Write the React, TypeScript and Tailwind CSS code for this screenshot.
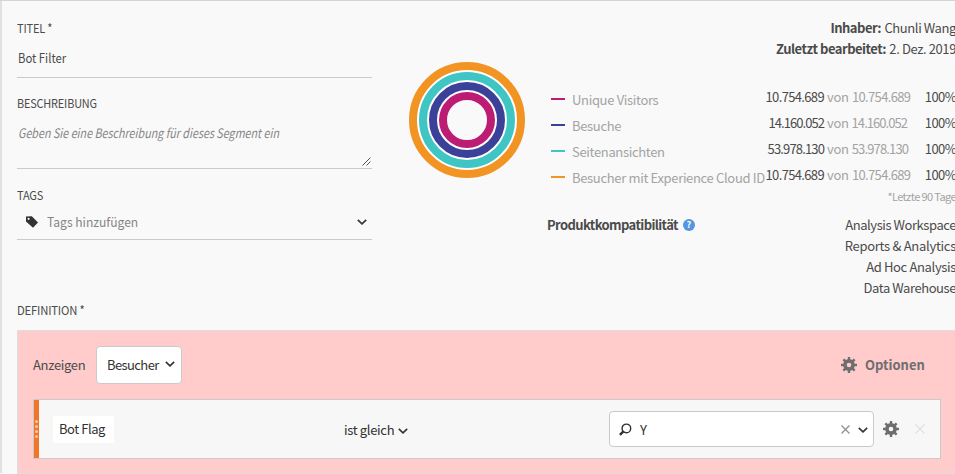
import type { ReactNode } from "react";

const FONT = "font-['Noto_Sans_CJK_SC','Noto_Sans',sans-serif]";

function Chevron({ className = "" }: { className?: string }) {
  return (
    <svg className={`shrink-0 ${className}`} width="10" height="6" viewBox="0 0 10 6" fill="none" stroke="#323232" strokeWidth="1.6">
      <path d="M0.8 0.8 L5 4.8 L9.2 0.8" />
    </svg>
  );
}

function Gear() {
  return (
    <svg width="16" height="16" viewBox="0 0 16 16" className="shrink-0">
      <g fill="#6e6e6e">
        {[0, 45, 90, 135, 180, 225, 270, 315].map((a) => (
          <rect key={a} x="6.8" y="0" width="2.4" height="4" transform={`rotate(${a} 8 8)`} />
        ))}
      </g>
      <circle cx="8" cy="8" r="4.1" fill="none" stroke="#6e6e6e" strokeWidth="3.6" />
    </svg>
  );
}

function Cross({ color, size }: { color: string; size: number }) {
  return (
    <svg width={size} height={size} viewBox="0 0 10 10" stroke={color} strokeWidth="1.4" className="shrink-0">
      <path d="M0.6 0.6 L9.4 9.4 M9.4 0.6 L0.6 9.4" />
    </svg>
  );
}

function Label({ children, className }: { children: ReactNode; className: string }) {
  return (
    <div className={`h-4 w-max origin-left text-[12px] leading-4 tracking-[-0.2px] text-[#4b4b4b] ${className}`}>{children}</div>
  );
}

const rings = [
  { r: 54, color: "#f29423" },
  { r: 44, color: "#3fc5c3" },
  { r: 34, color: "#3b4199" },
  { r: 24, color: "#bc1c74" },
];

const metrics = [
  { name: "Unique Visitors", color: "#bc1c74", value: "10.754.689", tracking: "tracking-[-0.65px]" },
  { name: "Besuche", color: "#3b4199", value: "14.160.052", tracking: "tracking-[-0.95px]" },
  { name: "Seitenansichten", color: "#3fc5c3", value: "53.978.130", tracking: "tracking-[-0.85px]" },
  { name: "Besucher mit Experience Cloud ID", color: "#f29423", value: "10.754.689", tracking: "tracking-[-0.65px]" },
];

const products = [
  { name: "Analysis Workspace", tracking: "tracking-[-0.43px]" },
  { name: "Reports & Analytics", tracking: "tracking-[-0.28px]" },
  { name: "Ad Hoc Analysis", tracking: "tracking-[-0.35px]" },
  { name: "Data Warehouse", tracking: "tracking-[-0.43px]" },
];

function Fields() {
  return (
    <div className="w-[355px] shrink-0 pt-[19px]">
      <Label className="scale-x-[0.92]">TITEL *</Label>
      <div className="mt-[10px] h-[32px] border-b border-[#cacaca] pl-px text-[13px] leading-6 text-[#4b4b4b]">
        <span className="inline-block origin-left scale-x-[0.87]">Bot Filter</span>
      </div>
      <div className="mt-[17px]">
        <Label className="scale-x-[0.91]">BESCHREIBUNG</Label>
      </div>
      <div className="mt-[10px] flex h-[48px] justify-between border-b border-[#cacaca] pl-px">
        <span className="w-[310px] origin-left scale-x-[0.827] whitespace-nowrap text-[13px] italic leading-6 text-[#858585]">
          Geben Sie eine Beschreibung für dieses Segment ein
        </span>
        <svg width="9" height="9" viewBox="0 0 9 9" stroke="#555" strokeWidth="1" className="mb-[2px] mr-[1px] self-end">
          <path d="M0.5 8.5 L8.5 0.5 M4.5 8.5 L8.5 4.5" />
        </svg>
      </div>
      <div className="mt-[18px]">
        <Label className="scale-x-[0.92]">TAGS</Label>
      </div>
      <div className="mt-[3px] flex h-[34px] items-center border-b border-[#cacaca] pb-[2px] pl-[9px] pr-[5px]">
        <svg width="12" height="12" viewBox="0 0 12 12" fill="#323232">
          <path fillRule="evenodd" d="M0 0.6 L5.8 0.2 L12 6.6 L7 11.8 L0 5.6 Z M2.6 1.7 a1.1 1.1 0 1 0 0.01 0 Z" />
        </svg>
        <span className="ml-[9px] origin-left scale-x-[0.93] text-[13px] leading-5 text-[#858585]">Tags hinzufügen</span>
        <Chevron className="ml-auto" />
      </div>
      <div className="mt-[62px]">
        <Label className="scale-x-[0.94]">DEFINITION *</Label>
      </div>
    </div>
  );
}

function Summary() {
  return (
    <div className="ml-[22px] w-[409px] shrink-0 pt-[16px] text-[13px] leading-[21px] text-[#4b4b4b]">
      <div className="whitespace-nowrap text-right tracking-[-0.5px]">
        <b>Inhaber:</b> <span className="ml-px tracking-[-0.4px]">Chunli Wang</span>
      </div>
      <div className="whitespace-nowrap text-right tracking-[-0.5px]">
        <b>Zuletzt bearbeitet:</b> <span className="ml-px tracking-[-0.4px]">2. Dez. 2019</span>
      </div>
      <div className="mt-[27px] flex h-[104px] flex-col">
        {metrics.map((m) => (
          <div key={m.name} className="flex h-[26px] whitespace-nowrap">
            <div className="flex h-[26px] w-[218px] shrink-0 items-center pl-[4px] tracking-[-0.33px] text-[#a3a3a3]">
              <span className="mr-[7px] h-[2px] w-[14px] shrink-0" style={{ background: m.color }} />
              {m.name}
            </div>
            <div className={`w-[59px] text-right leading-[22px] ${m.tracking}`}>{m.value}</div>
            <div className={`ml-[3px] leading-[22px] text-[#a3a3a3] ${m.tracking}`}>
              <span className="mr-[1px] tracking-[-0.3px]">von</span> {m.value}
            </div>
            <div className="ml-auto leading-[22px] tracking-[-0.6px]">100%</div>
          </div>
        ))}
      </div>
      <div className="h-[24px] text-right text-[11px] leading-[13px] tracking-[-0.6px] text-[#a3a3a3]">*Letzte 90 Tage</div>
      <div className="flex justify-between">
        <div className="flex h-[21px] items-center">
          <b className="tracking-[-0.6px]">Produktkompatibilität</b>
          <span className="ml-[5px] flex size-3 items-center justify-center rounded-full bg-[#5596e0] text-[9px] font-bold leading-3 text-white">?</span>
        </div>
        <div className="text-right">
          {products.map((p) => (
            <div key={p.name} className={p.tracking}>
              {p.name}
            </div>
          ))}
        </div>
      </div>
    </div>
  );
}

function Definition() {
  return (
    <div className="ml-[15px] h-[144px] w-[960px] border border-[#dedede] bg-[#ffcccb] text-[13px]">
      <div className="flex h-[68px] items-center pl-[15px] text-[#4b4b4b]">
        <span className="w-[63px] pb-px tracking-[-0.33px]">Anzeigen</span>
        <div className="flex h-[38px] w-[86px] items-center rounded-[4px] border border-[#cacaca] bg-white pl-[10px] text-[#323232]">
          <span className="w-[58px] pb-px tracking-[-0.6px]">Besucher</span>
          <Chevron className="mb-[3px]" />
        </div>
        <div className="ml-[659px] flex items-center gap-[8px] font-bold text-[#6e6e6e]">
          <Gear />
          Optionen
        </div>
      </div>
      <div className="ml-[15px] flex h-[60px] w-[908px] items-center border border-[#cacaca] bg-[#f7f7f7] text-[#323232]">
        <div className="flex h-full w-[5px] shrink-0 flex-col items-center justify-center gap-[2px] bg-[#f0762c]">
          {[0, 1, 2, 3].map((i) => (
            <span key={i} className="size-[3px] rounded-full bg-[#f9c8ab]" />
          ))}
        </div>
        <div className="ml-[14px] h-[27px] w-[61px] bg-white pl-[6px] leading-[26px] tracking-[-0.45px]">Bot Flag</div>
        <div className="ml-[230px] flex w-[265px] items-center gap-[4px] pt-[1px] tracking-[-0.33px]">
          ist gleich
          <Chevron className="mt-[3px]" />
        </div>
        <div className="flex h-9 w-[265px] shrink-0 items-center rounded-[4px] border border-[#cacaca] bg-white pl-[9px] pr-[5px] pt-[1px]">
          <svg width="13" height="13" viewBox="0 0 13 13" fill="none" stroke="#323232">
            <circle cx="7.4" cy="5.4" r="4.3" strokeWidth="1.4" />
            <path d="M4.4 8.4 L0.9 11.9" strokeWidth="2.4" />
          </svg>
          <span className="ml-[8px]">Y</span>
          <span className="ml-auto mr-[8px]">
            <Cross color="#8f8f8f" size={9} />
          </span>
          <Chevron />
        </div>
        <div className="ml-[9px] mr-[16px]">
          <Gear />
        </div>
        <Cross color="#e3e3e3" size={10} />
      </div>
    </div>
  );
}

export default function App() {
  return (
    <div className={`h-[474px] w-[955px] overflow-hidden border-t border-[#d5d5d5] bg-[#f9f9f9] ${FONT}`}>
      <div className="mt-[2px] h-[472px] border-l-2 border-[#e1e1e1]">
        <div className="-mt-[2px] flex h-[329px] pl-[15px]">
          <Fields />
          <svg width="116" height="116" viewBox="0 0 116 116" className="ml-[37px] mt-[61px] shrink-0" fill="none">
            <circle cx="58" cy="58" r="39" stroke="#fff" strokeWidth="36" />
            {rings.map((ring) => (
              <circle key={ring.r} cx="58" cy="58" r={ring.r} stroke={ring.color} strokeWidth="8" />
            ))}
          </svg>
          <Summary />
        </div>
        <Definition />
      </div>
    </div>
  );
}
